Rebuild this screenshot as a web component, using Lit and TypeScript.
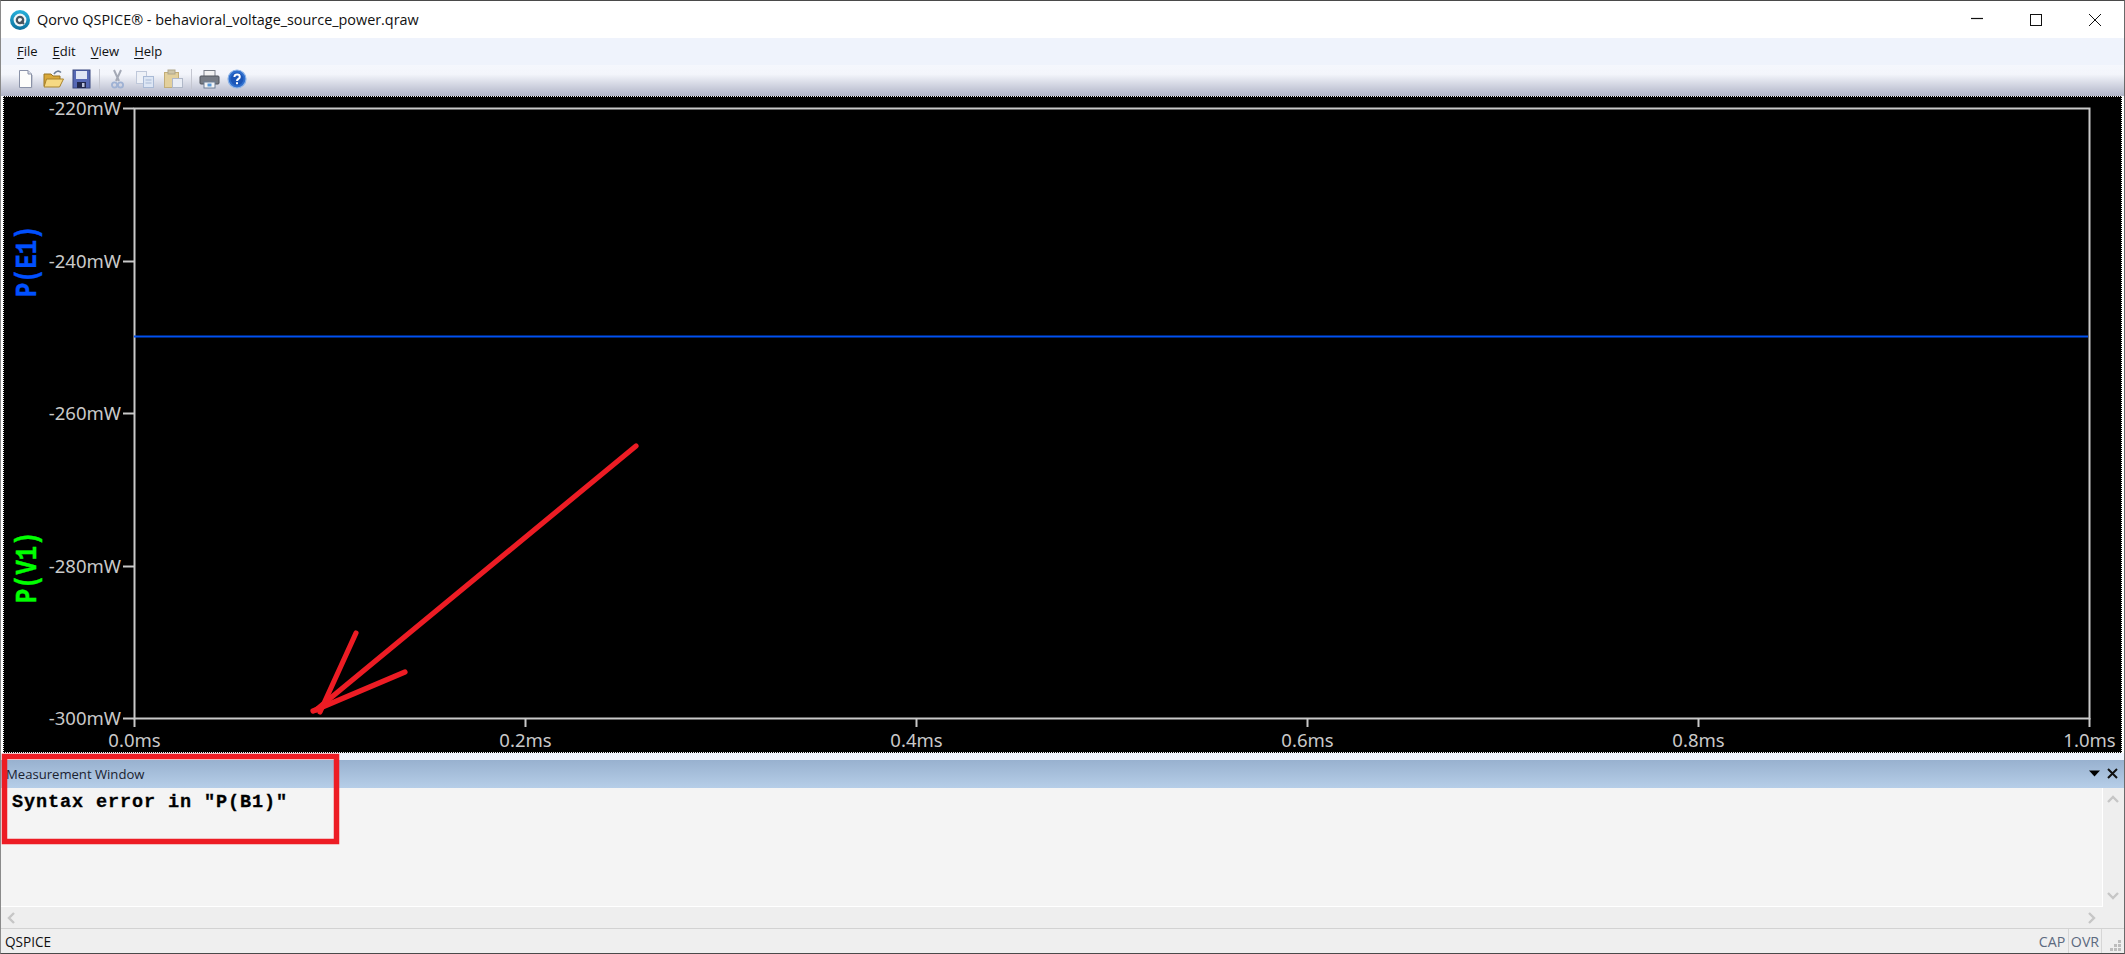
import { LitElement, html, css, svg } from "lit";
import { customElement } from "lit/decorators.js";

const Y = [["-220mW", 108], ["-240mW", 261], ["-260mW", 413], ["-280mW", 566], ["-300mW", 718]] as const;
const X = ["0.0ms", "0.2ms", "0.4ms", "0.6ms", "0.8ms", "1.0ms"];
const TOP = 96;

@customElement("app-root")
export class AppRoot extends LitElement {
  static styles = css`
    :host { display: block; width: 2125px; height: 954px; overflow: hidden; }
    .win { position: relative; width: 2125px; height: 954px; box-sizing: border-box; display: flex; flex-direction: column;
      background: #fff; border-left: 1px solid #8a8a8a; border-right: 1px solid #6a6a6a; border-top: 1px solid #4a4a4a; border-bottom: 1px solid #4a4a4a;
      font-family: "Open Sans", "Liberation Sans", sans-serif; color: #111; }
    .title { height: 37px; flex: none; display: flex; align-items: center; padding-left: 9px; gap: 7px; font-size: 14.4px; background: #fff; }
    .title .name { flex: 1; white-space: nowrap; }
    .caps { display: flex; height: 37px; }
    .cap { width: 59px; display: flex; align-items: center; justify-content: center; }
    .menu { height: 27px; flex: none; box-sizing: border-box; padding: 0 0 2px 16px; background: #eff3fc; display: flex; align-items: center; gap: 15px; font-size: 13px; }
    .menu u { text-underline-offset: 2px; }
    .tools { height: 31px; flex: none; background: linear-gradient(#f5f7fd 0%, #f3f5fb 30%, #b1b5c8 100%); display: flex; align-items: center; padding-left: 10px; box-sizing: border-box; padding-bottom: 4px; }
    .slot { width: 28px; display: flex; justify-content: center; flex: none; }
    .slot svg { display: block; }
    .sep { width: 8px; flex: none; display: flex; justify-content: center; }
    .sep i { display: block; width: 1px; height: 20px; background: #c4c6d0; }
    .plot { height: 657px; flex: none; margin: 0 2px; background: #000; box-sizing: border-box; border: 1px dotted #eee; }
    .plot svg { display: block; overflow: visible; }
    .ax { font: 18.5px "Noto Sans", "Liberation Sans", sans-serif; fill: #c9c9c9; }
    .tr { font: bold 29px "Liberation Mono", monospace; stroke-width: 0.4px; }
    .gap { height: 7px; flex: none; background: #f0f4fd; }
    .head { height: 28px; flex: none; background: linear-gradient(#98b1cf, #b6cee8); display: flex; align-items: center; font-size: 13.1px; padding: 0 5px; color: #1a2230; }
    .head .lbl { flex: 1; }
    .head svg { display: block; }
    .body { height: 140px; flex: none; display: grid; grid-template-columns: 1fr 20px; grid-template-rows: 1fr 21px; background: #eeeeee; padding-right: 1px; }
    .text { background: #f4f4f4; border-right: 1px solid #fff; border-bottom: 1px solid #fff; padding: 4px 0 0 11px; font: bold 18.5px "Liberation Mono", monospace; letter-spacing: 0.9px; -webkit-text-stroke: 0.3px #000; color: #000; white-space: pre; }
    .vs { display: flex; flex-direction: column; justify-content: space-between; align-items: center; padding: 7px 0; }
    .hs { display: flex; justify-content: space-between; align-items: center; padding: 0 7px 0 6px; }
    .status { flex: 1; border-top: 1px solid #d2d2d2; background: #efefef; display: flex; align-items: center; font-size: 13.6px; padding-left: 4px; }
    .status .m { flex: 1; }
    .st { color: #5c6a80; height: 100%; display: flex; align-items: center; justify-content: center; border-right: 1px solid #d6d6d6; font-size: 14.2px; box-sizing: border-box; width: 33px; }
    .grip { width: 22px; flex: none; }
    .grip svg { display: block; }
    .note { position: absolute; left: -1px; top: -1px; pointer-events: none; }
  `;

  private ic(w: number, body: unknown) {
    return html`<div class="slot"><svg width=${w} height="22" viewBox="0 0 ${w} 22">${body}</svg></div>`;
  }

  render() {
    return html`<div class="win">
      <div class="title">
        <svg width="20" height="20" viewBox="0 0 20 20"><defs><linearGradient id="lg" x1="0" y1="0" x2="0" y2="1"><stop offset="0" stop-color="#27b2dc"/><stop offset="1" stop-color="#0b6f9c"/></linearGradient></defs><circle cx="10" cy="10" r="10" fill="url(#lg)"/><circle cx="10" cy="10" r="6.4" fill="#f1f6f8"/><circle cx="10" cy="10" r="3.2" fill="none" stroke="#47545f" stroke-width="2.2"/><path d="M11 11l3 3" stroke="#47545f" stroke-width="2"/></svg>
        <div class="name">Qorvo QSPICE® - behavioral_voltage_source_power.qraw</div>
        <div class="caps">
          <div class="cap"><svg width="14" height="14" viewBox="0 0 14 14"><path d="M1 5.5H13" stroke="#111" stroke-width="1.2"/></svg></div>
          <div class="cap"><svg width="14" height="14" viewBox="0 0 14 14"><rect x="1.5" y="1.5" width="11" height="11" fill="none" stroke="#111" stroke-width="1"/></svg></div>
          <div class="cap"><svg width="14" height="14" viewBox="0 0 14 14"><path d="M1 1L13 13M13 1L1 13" stroke="#111" stroke-width="1"/></svg></div>
        </div>
      </div>
      <div class="menu"><span><u>F</u>ile</span><span><u>E</u>dit</span><span><u>V</u>iew</span><span><u>H</u>elp</span></div>
      <div class="tools">
        ${this.ic(15, svg`<path d="M1.5 2.5H10L13.5 6V19.5H1.5Z" fill="#fdfdfb" stroke="#8a92a8"/><path d="M10 2.5V6H13.5" fill="#d8dce6" stroke="#8a92a8"/><path d="M14.5 7V20.5H3" fill="none" stroke="#c4c8d4"/>`)}
        ${this.ic(21, svg`<path d="M1 6H8L10 8H17V18H1Z" fill="#d9a83a" stroke="#9a7420"/><path d="M3.5 11H20.5L16.5 19H1Z" fill="#f6d983" stroke="#a9832c"/><path d="M11 6C13 2.5 16 2.5 18 4.5" fill="none" stroke="#6e7f96" stroke-width="1.6"/>`)}
        ${this.ic(19, svg`<rect x="1" y="2" width="17" height="18" fill="#5668b4" stroke="#38477f"/><rect x="4" y="3" width="11" height="8" fill="#dfe5f4"/><rect x="5" y="14" width="9" height="6" fill="#22284c"/><rect x="10" y="15" width="2.5" height="4" fill="#b9c0da"/>`)}
        <div class="sep"><i></i></div>
        ${this.ic(13, svg`<path d="M3 2L8 13M10 2L5 13" stroke="#a4a9b6" stroke-width="2" fill="none"/><circle cx="3.5" cy="17" r="2.6" fill="none" stroke="#9fb2d4" stroke-width="1.8"/><circle cx="9.5" cy="17" r="2.6" fill="none" stroke="#9fb2d4" stroke-width="1.8"/>`)}
        ${this.ic(20, svg`<rect x="1.5" y="3.5" width="10" height="12" fill="#eef1f7" stroke="#bfc8da"/><rect x="8.5" y="8.5" width="10" height="11" fill="#dde6f4" stroke="#a9bad6"/><path d="M10.5 12H16.5M10.5 15H16.5" stroke="#a9bad6"/>`)}
        ${this.ic(21, svg`<rect x="1.5" y="4.5" width="14" height="15" fill="#e3d09c" stroke="#c2ad78"/><rect x="5" y="2" width="7" height="4" fill="#cfc6a8" stroke="#aea58a"/><rect x="9.5" y="10.5" width="10" height="9" fill="#e9edf5" stroke="#b0b8c8"/>`)}
        <div class="sep"><i></i></div>
        ${this.ic(21, svg`<rect x="5" y="2.5" width="11" height="7" fill="#f2f2f2" stroke="#7a7f88"/><rect x="1" y="8" width="19" height="8" rx="1" fill="#777c85" stroke="#50545c"/><rect x="5" y="14" width="11" height="6" fill="#f4f4f4" stroke="#6d7f98"/><rect x="8.5" y="15.5" width="4" height="3" fill="#5b9ad8"/>`)}
        ${this.ic(20, svg`<circle cx="10" cy="11" r="9" fill="#2f6fce" stroke="#8fb4e6" stroke-width="1.2"/><circle cx="10" cy="11" r="6.5" fill="#1c56b8"/><path d="M7.4 9C7.6 5.8 12.8 5.8 12.8 9C12.8 11 10 10.8 10 13" fill="none" stroke="#fff" stroke-width="2"/><rect x="9" y="14.2" width="2" height="2" fill="#fff"/>`)}
      </div>
      <div class="plot">
        <svg width="2119" height="655" viewBox="4 ${TOP + 1} 2119 655">
          <path d="M134.5 108.5H2089.5V718.5H134.5Z" fill="none" stroke="#c9c9c9" stroke-width="2"/>
          ${Y.map(([t, y]) => svg`
            <path d="M123 ${y + 0.5}H134" stroke="#c9c9c9" stroke-width="2"/>
            <text class="ax" x="121" y=${y + 7} text-anchor="end">${t}</text>`)}
          ${X.map((t, i) => svg`
            <path d="M${134.5 + i * 391} 718V727" stroke="#c9c9c9" stroke-width="2"/>
            <text class="ax" x=${134.5 + i * 391} y="747" text-anchor="middle">${t}</text>`)}
          <path d="M134 336.5H2088" stroke="#0050f0" stroke-width="2"/>
          <text class="tr" fill="#0050ff" stroke="#0050ff" transform="translate(36 297) rotate(-90) scale(0.82 1)">P(E1)</text>
          <text class="tr" fill="#00ff00" stroke="#00ff00" transform="translate(36 603) rotate(-90) scale(0.82 1)">P(V1)</text>
        </svg>
      </div>
      <div class="gap"></div>
      <div class="head"><span class="lbl">Measurement Window</span>
        <svg width="30" height="14" viewBox="0 0 30 14"><path d="M0 3.5H11L5.5 9.5Z" fill="#000"/><path d="M19 2L28 11M28 2L19 11" stroke="#111" stroke-width="2"/></svg>
      </div>
      <div class="body">
        <div class="text">Syntax error in "P(B1)"</div>
        <div class="vs">
          <svg width="12" height="8" viewBox="0 0 12 8"><path d="M1 7L6 2L11 7" fill="none" stroke="#c6c6c6" stroke-width="2.4"/></svg>
          <svg width="12" height="8" viewBox="0 0 12 8"><path d="M1 1L6 6L11 1" fill="none" stroke="#c6c6c6" stroke-width="2.4"/></svg>
        </div>
        <div class="hs">
          <svg width="8" height="12" viewBox="0 0 8 12"><path d="M7 1L2 6L7 11" fill="none" stroke="#c6c6c6" stroke-width="2.4"/></svg>
          <svg width="8" height="12" viewBox="0 0 8 12"><path d="M1 1L6 6L1 11" fill="none" stroke="#c6c6c6" stroke-width="2.4"/></svg>
        </div>
      </div>
      <div class="status">
        <span class="m">QSPICE</span>
        <span class="st">CAP</span><span class="st">OVR</span>
        <span class="grip"><svg width="22" height="20" viewBox="0 0 22 20"><path d="M16 9h3v3h-3zM12 13h3v3h-3zM16 13h3v3h-3zM8 17h3v3h-3zM12 17h3v3h-3zM16 17h3v3h-3z" fill="#bdbdbd"/></svg></span>
      </div>
      <svg class="note" width="2125" height="954" viewBox="0 0 2125 954">
        <rect x="4.5" y="756.5" width="332" height="85" fill="none" stroke="#ed1c24" stroke-width="5.5"/>
        <g fill="none" stroke="#ed1c24" stroke-width="5.2" stroke-linecap="round">
          <path d="M636 446L316 710"/>
          <path d="M356 633L320 712"/>
          <path d="M405 672L313 711"/>
        </g>
      </svg>
    </div>`;
  }
}
